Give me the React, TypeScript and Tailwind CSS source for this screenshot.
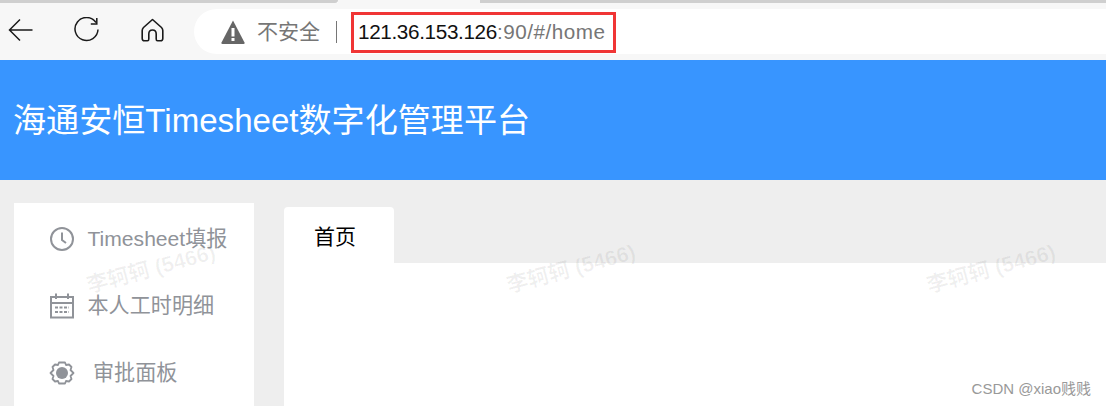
import { ReactNode } from 'react';

const sans = 'font-["Liberation_Sans","Noto_Sans_CJK_SC",sans-serif]';

function Watermark({ className }: { className: string }) {
  return (
    <span className={`absolute -rotate-[15deg] whitespace-nowrap text-[21.500px] font-bold leading-none text-black/[0.06] ${className}`}>
      李轲轲 (5466)
    </span>
  );
}

function MenuRow({ icon, label, gap }: { icon: ReactNode; label: string; gap: string }) {
  return (
    <div className={`flex h-[67px] items-center pl-[35px] text-[21.100px] text-[#909399] ${gap}`}>
      {icon}
      <span>{label}</span>
    </div>
  );
}

export default function App() {
  return (
    <div className={`relative flex h-[406px] w-[1106px] flex-col overflow-hidden bg-[#eeeeee] ${sans}`}>
      <div className="flex h-[3px] shrink-0 bg-white">
        <div className="w-[338px] rounded-br-[4px] bg-[#cfcfcf]" />
        <div className="w-[142px] bg-[#f7f7f7]" />
        <div className="flex-1 bg-[#cfcfcf]" />
      </div>
      <div className="flex h-[57px] shrink-0 bg-[#f7f7f7]">
        <div className="flex items-center pb-[4px] pl-[8px]">
          <svg width="25" height="24" viewBox="0 0 25 24" fill="none" stroke="#1a1a1a" strokeWidth="1.5">
            <path d="M24.5 12H1.5M12 1.5 1.5 12 12 22.5" />
          </svg>
          <svg className="ml-[41px]" width="25" height="25" viewBox="0 0 25 25" fill="none" stroke="#1a1a1a" strokeWidth="1.5">
            <path d="M22 5.500A11.500 11.500 0 1 0 24 12.500" />
            <path d="M22.800 1v6h-6" />
          </svg>
          <svg className="ml-[42px]" width="23" height="24" viewBox="0 0 23 24" fill="none" stroke="#1a1a1a" strokeWidth="1.6" strokeLinejoin="round">
            <path d="M11.500 1.500 2.500 9.500C1.500 10.500 1.200 11 1.200 12.500V20.500C1.200 22 2 22.800 3.500 22.800H6.500C7.500 22.800 7.800 22 7.800 21V16C7.800 13.500 9.500 12 11.500 12S15.200 13.500 15.200 16V21C15.200 22 15.500 22.800 16.500 22.800H19.500C21 22.800 21.800 22 21.800 20.500V12.500C21.800 11 21.500 10.500 20.500 9.500Z" />
          </svg>
        </div>
        <div className="mb-[6px] ml-[30px] mt-[6px] flex flex-1 items-center rounded-l-[23px] bg-white pl-[27px]">
          <svg width="24" height="24" viewBox="0 0 24 24">
            <path d="M12 0.500 23.500 22.500Q24 24 22.500 24H1.500Q0 24 .5 22.500Z" fill="#666666" />
            <rect x="10.500" y="8" width="3" height="8.500" fill="#ffffff" />
            <rect x="10.500" y="18" width="3" height="3" fill="#ffffff" />
          </svg>
          <span className="ml-[12px] text-[21px] text-[#767676]">不安全</span>
          <span className="ml-[16px] h-[22px] w-px bg-[#767676]" />
          <span className="ml-[21px] text-[20.700px] tracking-[-0.350px] text-[#111111]">
            121.36.153.126<span className="tracking-[0.500px] text-[#767676]">:90/#/home</span>
          </span>
        </div>
      </div>
      <header className="flex h-[120px] shrink-0 items-center bg-[#3895ff] pl-[13px] pt-[2px] text-[33.100px] text-white">
        海通安恒Timesheet数字化管理平台
      </header>
      <div className="flex min-h-0 flex-1 pl-[14px]">
        <nav className="mt-[23px] w-[240px] shrink-0 bg-white pt-[2px]">
          <MenuRow
            gap="gap-[12.500px]"
            label="Timesheet填报"
            icon={
              <svg width="26" height="26" viewBox="0 0 26 26" fill="none" stroke="#909399" strokeWidth="2">
                <circle cx="13" cy="13" r="11" />
                <path d="M13 6.500V14L17 17" />
              </svg>
            }
          />
          <MenuRow
            gap="gap-[12.500px]"
            label="本人工时明细"
            icon={
              <svg width="26" height="26" viewBox="0 0 26 26" fill="none" stroke="#909399" strokeWidth="2">
                <rect x="2" y="4" width="22" height="20.500" />
                <path d="M2 10h22M7 .5V6M19 .5V6" />
                <path d="M6 14.500h14M6 19h14" strokeDasharray="3 1.500" />
              </svg>
            }
          />
          <MenuRow
            gap="gap-[18px]"
            label="审批面板"
            icon={
              <svg width="26" height="26" viewBox="0 0 26 26" fill="none" stroke="#909399" strokeWidth="1.8" strokeLinejoin="round">
                <path d="M10 2.500H16L17 5 20 4.500 22.500 7 21.500 10 24.500 13 21.500 16 22.500 19 20 21.500 17 21 16 23.500H10L9 21 6 21.500 3.500 19 4.500 16 1.500 13 4.500 10 3.500 7 6 4.500 9 5Z" />
                <circle cx="13" cy="13" r="6" fill="#909399" stroke="none" />
              </svg>
            }
          />
        </nav>
        <main className="ml-[30px] mt-[27px] flex min-w-0 flex-1 flex-col">
          <div className="flex h-[56px] w-[110px] shrink-0 items-center justify-center rounded-t-[4px] bg-white pr-[8px] pt-[4px] text-[21px] text-black">
            首页
          </div>
          <div className="flex-1 bg-white" />
        </main>
      </div>
      <Watermark className="left-[85px] top-[259px]" />
      <Watermark className="left-[505px] top-[259px]" />
      <Watermark className="left-[925px] top-[259px]" />
      <span className="absolute right-[15px] top-[379px] text-[15px] leading-[20px] text-[#999999]">CSDN @xiao贱贱</span>
      <div className="absolute left-[351px] top-[12px] h-[41px] w-[265px] border-[3px] border-[#f03535]" />
    </div>
  );
}
